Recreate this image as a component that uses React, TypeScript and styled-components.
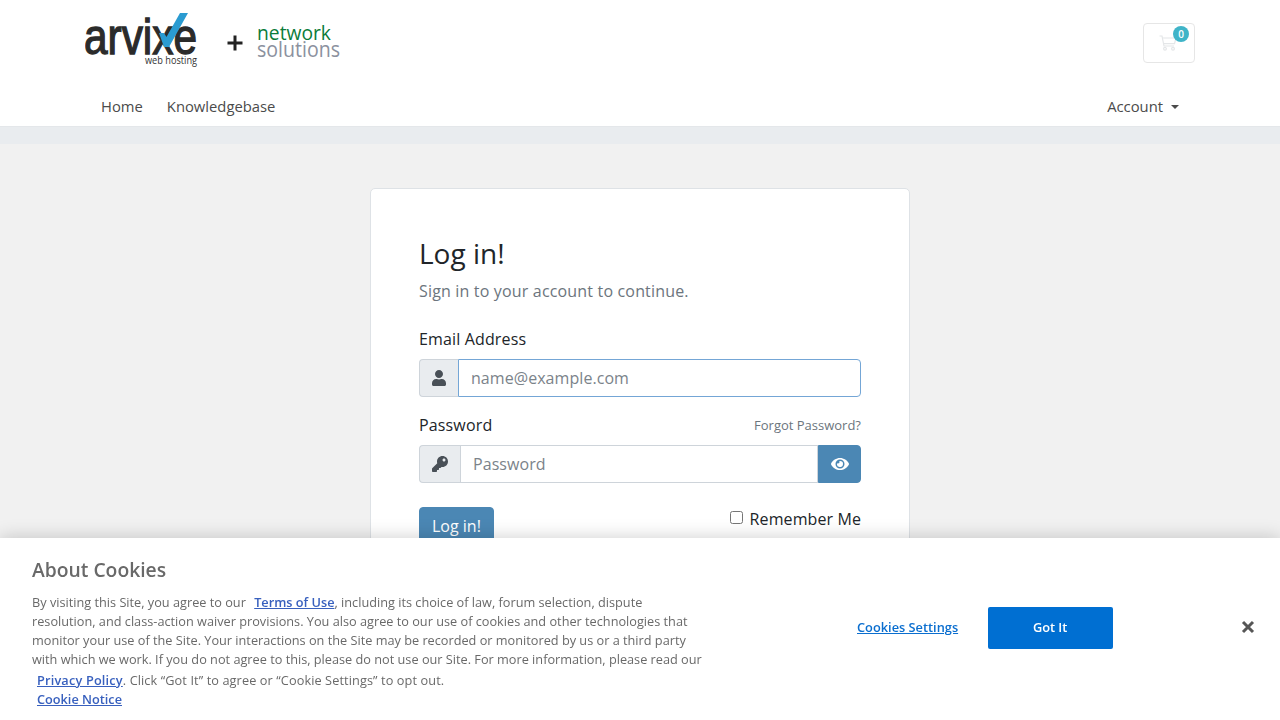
import { createGlobalStyle } from "styled-components";
import styled from "styled-components";
import { FaUser, FaKey, FaEye } from "react-icons/fa";

const GlobalStyle = createGlobalStyle`
  html, body {
    margin: 0;
    height: 720px;
    overflow: hidden;
    background: #f1f1f1;
    font-family: "Open Sans", "Noto Sans", sans-serif;
    color: #212529;
  }
  * { box-sizing: border-box; }
`;

const Header = styled.header`
  background: #fff;
  height: 127px;
  border-bottom: 1px solid #e4e7ea;
`;

const Container = styled.div`
  width: 1140px;
  margin: 0 auto;
  padding: 0 15px;
`;

const LogoRow = styled.div`
  display: flex;
  justify-content: space-between;
  height: 86px;
`;

const LogoMark = styled.svg`
  display: block;
  width: 260px;
  height: 70px;
`;

const CartButton = styled.div`
  position: relative;
  width: 52px;
  height: 40px;
  margin-top: 23px;
  border: 1px solid #e6e6e6;
  border-radius: 4px;
  display: flex;
  align-items: center;
  justify-content: center;
  padding-right: 3px;
`;

const CartBadge = styled.span`
  position: absolute;
  top: 2px;
  right: 5px;
  width: 16px;
  height: 16px;
  border-radius: 50%;
  background: #3fb4c8;
  color: #fff;
  font-size: 10px;
  font-weight: 600;
  line-height: 16px;
  text-align: center;
`;

const Nav = styled.nav`
  display: flex;
  justify-content: space-between;
  height: 40px;
`;

const NavGroup = styled.div`
  display: flex;
`;

const NavItem = styled.a`
  padding: 8px 8px 8px 16px;
  font-size: 14.8px;
  line-height: 24px;
  color: #4b4b4b;
  & + & { padding-left: 16px; }
`;

const AccountItem = styled(NavItem)`
  padding-right: 16px;
  &::after {
    content: "";
    display: inline-block;
    margin-left: 8px;
    vertical-align: 3px;
    border-top: 4.5px solid #4b4b4b;
    border-left: 4px solid transparent;
    border-right: 4px solid transparent;
  }
`;

const Band = styled.div`
  height: 17px;
  background: #e9ecef;
`;

const Main = styled.main`
  display: flex;
  justify-content: center;
  padding-top: 44px;
`;

const Card = styled.section`
  width: 540px;
  height: 420px;
  padding: 48px;
  background: #fff;
  border: 1px solid #dee2e6;
  border-radius: 5px;
`;

const Title = styled.h1`
  margin: 0 0 8px;
  font-size: 28px;
  font-weight: 400;
  line-height: 33.6px;
  color: #212529;
`;

const Subtitle = styled.p`
  margin: 0 0 24px;
  font-size: 16px;
  line-height: 24px;
  letter-spacing: 0.17px;
  color: #6c757d;
`;

const LabelRow = styled.div`
  display: flex;
  justify-content: space-between;
  align-items: center;
  height: 24px;
  margin-bottom: 8px;
  font-size: 16px;
  line-height: 24px;
  letter-spacing: 0.15px;
`;

const ForgotLink = styled.a`
  font-size: 13px;
  letter-spacing: 0;
  color: #6c757d;
`;

const InputGroup = styled.div`
  display: flex;
  height: 38px;
  margin-bottom: 16px;
`;

const Addon = styled.span<{ $wide?: boolean }>`
  width: ${(p) => (p.$wide ? 41 : 39)}px;
  flex: none;
  display: flex;
  align-items: center;
  justify-content: center;
  background: #e9ecef;
  border: 1px solid #ced4da;
  border-right: none;
  border-radius: 4px 0 0 4px;
  color: #495057;
  font-size: 16px;
`;

const Field = styled.input<{ $focus?: boolean; $joined?: boolean }>`
  flex: 1;
  min-width: 0;
  padding: 6px 12px;
  font: 400 16px/24px "Open Sans", "Noto Sans", sans-serif;
  letter-spacing: 0.06px;
  color: #495057;
  background: #fff;
  outline: none;
  border: 1px solid ${(p) => (p.$focus ? "#74a6d6" : "#ced4da")};
  border-radius: ${(p) => (p.$joined ? "0" : "0 4px 4px 0")};
  &::placeholder { color: #7b838a; opacity: 1; }
`;

const EyeButton = styled.button`
  width: 43px;
  flex: none;
  display: flex;
  align-items: center;
  justify-content: center;
  background: #4b87b4;
  border: 1px solid #4b87b4;
  border-radius: 0 4px 4px 0;
  color: #fff;
  font-size: 18px;
  padding: 0;
`;

const ActionRow = styled.div`
  display: flex;
  justify-content: space-between;
  align-items: flex-start;
  margin-top: 24px;
`;

const SubmitButton = styled.button`
  height: 38px;
  padding: 6px 12px;
  background: #4b87b4;
  border: 1px solid #4b87b4;
  border-radius: 4px;
  color: #fff;
  font: 400 16px/24px "Open Sans", "Noto Sans", sans-serif;
`;

const Remember = styled.label`
  display: flex;
  align-items: flex-start;
  font-size: 16px;
  line-height: 24px;
  letter-spacing: 0.1px;
  color: #212529;
`;

const RememberBox = styled.input`
  width: 13px;
  height: 13px;
  margin: 4px 7px 0 0;
`;

const CookieBanner = styled.aside`
  position: fixed;
  left: 0;
  right: 0;
  bottom: 0;
  height: 182px;
  background: #fff;
  box-shadow: 0 0 18px rgba(0, 0, 0, 0.2);
  display: flex;
  align-items: flex-start;
`;

const CookieCopy = styled.div`
  width: 704px;
  flex: none;
  margin-left: 32px;
  padding-top: 20px;
`;

const CookieTitle = styled.h2`
  margin: 0 0 11px;
  font-size: 19.3px;
  font-weight: 600;
  line-height: 24px;
  color: #696969;
`;

const CookieText = styled.p`
  margin: 0;
  width: 674px;
  font-size: 12.72px;
  line-height: 19px;
  color: #696969;
`;

const PolicyLink = styled.a`
  margin-left: 5px;
  font-weight: 600;
  color: #3860be;
  text-decoration: underline;
`;

const PrivacyLink = styled(PolicyLink)`
  display: inline-block;
  margin-top: 2px;
  letter-spacing: 0.18px;
`;

const CookieTail = styled.span`
  letter-spacing: 0.1px;
`;

const CookieActions = styled.div`
  display: flex;
  align-items: center;
  margin: 69px 0 0 121px;
`;

const SettingsLink = styled.a`
  margin-bottom: 2px;
  font-size: 12.8px;
  font-weight: 600;
  color: #0a6ecf;
  text-decoration: underline;
`;

const GotItButton = styled.button`
  width: 125px;
  height: 42px;
  margin-left: 29.5px;
  padding: 0 0 2px;
  background: #006fd2;
  border: none;
  border-radius: 2px;
  color: #fff;
  font: 600 12.8px "Open Sans", "Noto Sans", sans-serif;
`;

const CloseButton = styled.button`
  width: 16px;
  height: 16px;
  margin: 0 0 2px 127px;
  padding: 0;
  background: none;
  border: none;
  display: flex;
`;

function Logo() {
  return (
    <LogoMark viewBox="0 0 260 70">
      <text x="-1" y="54" fontFamily="Liberation Sans" fontSize="50" textLength="113" lengthAdjust="spacingAndGlyphs" fill="#2b2b2b" stroke="#2b2b2b" strokeWidth="1.3">
        arvixe
      </text>
      <path d="M74 33 L79 47 L84 47 L103 13 L95 13 L81.5 37 L79 33 Z" fill="#2a9bd1" />
      <text x="60" y="64" fontFamily="Open Sans" fontSize="10" textLength="52" lengthAdjust="spacingAndGlyphs" fill="#333">
        web hosting
      </text>
      <path d="M142.5 43 h15 M150 35.5 v15" stroke="#222" strokeWidth="3" fill="none" />
      <text x="172" y="40" fontFamily="Open Sans" fontSize="20" textLength="74" lengthAdjust="spacingAndGlyphs" fill="#0b7c3a">
        network
      </text>
      <text x="172" y="57" fontFamily="Open Sans" fontSize="22" textLength="83" lengthAdjust="spacingAndGlyphs" fill="#8b919e">
        solutions
      </text>
    </LogoMark>
  );
}

function CartIcon() {
  return (
    <svg width="18" height="16" viewBox="0 0 18 16" fill="none" stroke="#e4e6e8" strokeWidth="1.2">
      <path d="M0.5 1 H3 L5 11 H15" />
      <path d="M3.4 3 H17 L15.5 8.6 H4.5" />
      <circle cx="6" cy="13.8" r="1.4" />
      <circle cx="14" cy="13.8" r="1.4" />
    </svg>
  );
}

export default function App() {
  return (
    <>
      <GlobalStyle />
      <Header>
        <Container>
          <LogoRow>
            <Logo />
            <CartButton>
              <CartIcon />
              <CartBadge>0</CartBadge>
            </CartButton>
          </LogoRow>
          <Nav>
            <NavGroup>
              <NavItem>Home</NavItem>
              <NavItem>Knowledgebase</NavItem>
            </NavGroup>
            <AccountItem>Account</AccountItem>
          </Nav>
        </Container>
      </Header>
      <Band />
      <Main>
        <Card>
          <Title>Log in!</Title>
          <Subtitle>Sign in to your account to continue.</Subtitle>
          <LabelRow>Email Address</LabelRow>
          <InputGroup>
            <Addon><FaUser /></Addon>
            <Field $focus placeholder="name@example.com" />
          </InputGroup>
          <LabelRow>
            Password
            <ForgotLink>Forgot Password?</ForgotLink>
          </LabelRow>
          <InputGroup>
            <Addon $wide><FaKey /></Addon>
            <Field $joined placeholder="Password" />
            <EyeButton><FaEye /></EyeButton>
          </InputGroup>
          <ActionRow>
            <SubmitButton>Log in!</SubmitButton>
            <Remember>
              <RememberBox type="checkbox" />
              Remember Me
            </Remember>
          </ActionRow>
        </Card>
      </Main>
      <CookieBanner>
        <CookieCopy>
          <CookieTitle>About Cookies</CookieTitle>
          <CookieText>
            By visiting this Site, you agree to our <PolicyLink>Terms of Use</PolicyLink>, including its choice of law, forum selection, dispute resolution, and class-action waiver provisions. You also agree to our use of cookies and other technologies that monitor your use of the Site. Your interactions on the Site may be recorded or monitored by us or a third party with which we work. If you do not agree to this, please do not use our Site. For more information, please read our <PrivacyLink>Privacy Policy</PrivacyLink><CookieTail>. Click “Got It” to agree or “Cookie Settings” to opt out.</CookieTail>
            <br />
            <PolicyLink>Cookie Notice</PolicyLink>
          </CookieText>
        </CookieCopy>
        <CookieActions>
          <SettingsLink>Cookies Settings</SettingsLink>
          <GotItButton>Got It</GotItButton>
          <CloseButton>
            <svg width="16" height="16" viewBox="0 0 16 16" stroke="#565656" strokeWidth="3">
              <path d="M3 3 L13 13 M13 3 L3 13" />
            </svg>
          </CloseButton>
        </CookieActions>
      </CookieBanner>
    </>
  );
}
